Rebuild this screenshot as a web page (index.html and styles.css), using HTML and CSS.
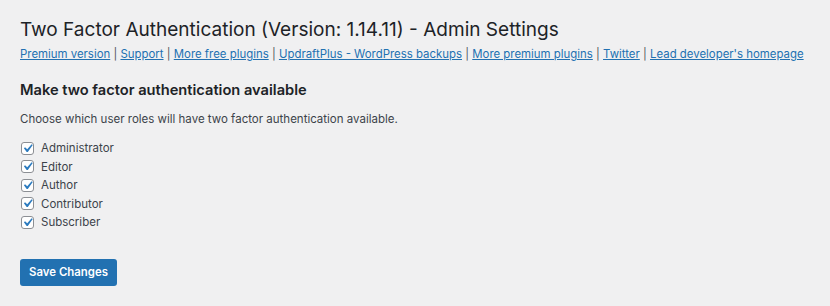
FILE: index.html
```html
<!DOCTYPE html>
<html lang="en">
<head>
    <meta charset="UTF-8">
    <meta name="viewport" content="width=device-width, initial-scale=1.0">
    <title>Two Factor Authentication - Admin Settings</title>
    <link rel="stylesheet" href="styles.css">
</head>
<body>
    <div class="wrap">
        <h1>Two Factor Authentication (Version: 1.14.11) - Admin Settings</h1>

        <div class="links">
            <a href="#">Premium version</a> |
            <a href="#">Support</a> |
            <a href="#">More free plugins</a> |
            <a href="#">UpdraftPlus - WordPress backups</a> |
            <a href="#">More premium plugins</a> |
            <a href="#">Twitter</a> |
            <a href="#">Lead developer's homepage</a>
        </div>

        <h2>Make two factor authentication available</h2>

        <p class="intro">Choose which user roles will have two factor authentication available.</p>

        <div class="roles">
            <label class="role"><span class="check"><svg viewBox="0 0 20 20"><path d="M14.83 4.89l1.34.94-5.81 8.38H9.02L5.78 9.67l1.34-1.25 2.57 2.4z"/></svg></span>Administrator</label>
            <label class="role"><span class="check"><svg viewBox="0 0 20 20"><path d="M14.83 4.89l1.34.94-5.81 8.38H9.02L5.78 9.67l1.34-1.25 2.57 2.4z"/></svg></span>Editor</label>
            <label class="role"><span class="check"><svg viewBox="0 0 20 20"><path d="M14.83 4.89l1.34.94-5.81 8.38H9.02L5.78 9.67l1.34-1.25 2.57 2.4z"/></svg></span>Author</label>
            <label class="role"><span class="check"><svg viewBox="0 0 20 20"><path d="M14.83 4.89l1.34.94-5.81 8.38H9.02L5.78 9.67l1.34-1.25 2.57 2.4z"/></svg></span>Contributor</label>
            <label class="role"><span class="check"><svg viewBox="0 0 20 20"><path d="M14.83 4.89l1.34.94-5.81 8.38H9.02L5.78 9.67l1.34-1.25 2.57 2.4z"/></svg></span>Subscriber</label>
        </div>

        <button class="button-primary">Save Changes</button>
    </div>
</body>
</html>
```

FILE: styles.css
```css
body {
    margin: 0;
    background: #f0f0f1;
    color: #1d2327;
    font-family: Inter, "Liberation Sans", sans-serif;
}
.wrap {
    padding: 17px 20px;
}
h1 {
    margin: 0;
    font-size: 19.05px;
    font-weight: 400;
    line-height: 26px;
}
.links {
    margin-top: 3px;
    font-size: 11.42px;
    line-height: 16px;
    color: #50575e;
    white-space: nowrap;
}
.links a {
    color: #2271b1;
}
h2 {
    margin: 18px 0 0;
    font-size: 14.65px;
    font-weight: 600;
    line-height: 20px;
}
.intro {
    margin: 11px 0 0;
    font-size: 11.5px;
    line-height: 16px;
    color: #3c434a;
}
.roles {
    margin-top: 12px;
    display: flex;
    flex-direction: column;
}
.role {
    display: flex;
    align-items: center;
    height: 18.5px;
    font-size: 11.5px;
    color: #3c434a;
}
.check {
    width: 11px;
    height: 11px;
    margin: 0 7px 0 1px;
    border: 1px solid #8c8f94;
    border-radius: 3px;
    background: #fff;
    display: flex;
    align-items: center;
    justify-content: center;
}
.check svg {
    flex: none;
    width: 17px;
    height: 17px;
    fill: #2c7bbf;
}
.button-primary {
    margin-top: 27px;
    width: 97px;
    height: 27px;
    padding: 0;
    border: none;
    border-radius: 3px;
    background: #2271b1;
    color: #fff;
    font-family: inherit;
    font-size: 11.4px;
    font-weight: 600;
}
```
